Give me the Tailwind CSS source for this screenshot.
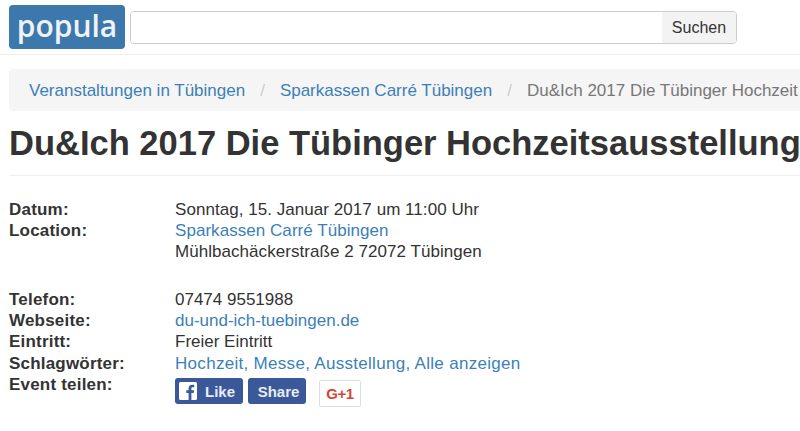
<!DOCTYPE html>
<html lang="de">
<head>
  <meta charset="UTF-8" />
  <title>Du&amp;Ich 2017</title>
  <script src="https://cdn.jsdelivr.net/npm/@tailwindcss/browser@4"></script>
</head>
<body class="bg-white h-[431px] w-[800px] overflow-hidden font-['Liberation_Sans',Arial,sans-serif] text-[#333] text-[17px] leading-[21px]">

  <!-- Header -->
  <div class="h-[55px] flex items-start border-b border-[#eee] pl-[9px] pt-[5px]">
    <div class="w-[116px] h-[44px] bg-[#3c78ab] rounded-[4px] flex items-center justify-center text-[#eef3f8] text-[30px] font-semibold font-['Open_Sans',sans-serif] leading-none pb-[2px]">popula</div>
    <div class="ml-[5px] mt-[6px] flex h-[33px] w-[607px] border border-[#ccc] rounded-[4px] overflow-hidden">
      <div class="flex-1 bg-white"></div>
      <div class="w-[74px] bg-[#f3f3f3] flex items-center justify-center text-[16px] text-[#333]">Suchen</div>
    </div>
  </div>

  <!-- Breadcrumb -->
  <div class="ml-[9px] mt-[14px] h-[42px] bg-[#f5f5f5] rounded-l-[4px] flex items-center pl-[20px] whitespace-nowrap overflow-hidden">
    <a class="text-[#3c7fb7]">Veranstaltungen in Tübingen</a>
    <span class="text-[#ccc] px-[15px]">/</span>
    <a class="text-[#3c7fb7]">Sparkassen Carré Tübingen</a>
    <span class="text-[#ccc] px-[15px]">/</span>
    <span class="text-[#777]">Du&amp;Ich 2017 Die Tübinger Hochzeit</span>
  </div>

  <!-- Title -->
  <h1 class="ml-[9px] mt-[14px] text-[34.5px] leading-[36px] font-bold whitespace-nowrap">Du&amp;Ich 2017 Die Tübinger Hochzeitsausstellung</h1>
  <div class="ml-[9px] mt-[14px] border-b border-[#eee]"></div>

  <!-- Details -->
  <div class="ml-[9px] mt-[23px] grid grid-cols-[166px_1fr]">
    <div class="font-bold tracking-[0.2px]">Datum:</div>
    <div class="tracking-[0.05px]">Sonntag, 15. Januar 2017 um 11:00 Uhr</div>
    <div class="font-bold tracking-[0.2px]">Location:</div>
    <div class="tracking-[0.05px]">
      <a class="text-[#3c7fb7] block">Sparkassen Carré Tübingen</a>
      Mühlbachäckerstraße 2 72072 Tübingen
    </div>
    <div class="h-[27px] col-span-2"></div>
    <div class="font-bold tracking-[0.2px]">Telefon:</div>
    <div>07474 9551988</div>
    <div class="font-bold tracking-[0.2px]">Webseite:</div>
    <div class="text-[#3c7fb7]">du-und-ich-tuebingen.de</div>
    <div class="font-bold tracking-[0.2px] h-[22px]">Eintritt:</div>
    <div>Freier Eintritt</div>
    <div class="font-bold tracking-[0.2px]">Schlagwörter:</div>
    <div class="text-[#3c7fb7] tracking-[0.3px]">Hochzeit, Messe, Ausstellung, Alle anzeigen</div>
    <div class="font-bold tracking-[0.2px]">Event teilen:</div>
    <div class="flex items-start pt-[4px]">
      <div class="h-[26px] w-[68px] bg-[#3b5998] rounded-[3px] flex items-center pl-[4px] text-[#e8ecf4] text-[15px] font-bold">
        <svg class="w-[18px] h-[18px]" viewBox="0 0 18 18"><rect width="18" height="18" rx="1.5" fill="#fff"/><path d="M12.4 18v-7h2.3l.4-2.7h-2.7V6.6c0-.8.2-1.3 1.3-1.3h1.500V2.900c-.3 0-1.100-.1-2.100-.1-2.100 0-3.500 1.300-3.500 3.600v1.900H7.300V11h2.300v7z" fill="#3b5998"/></svg>
        <span class="ml-[8px]">Like</span>
      </div>
      <div class="ml-[5px] h-[26px] w-[58px] bg-[#3b5998] rounded-[3px] flex items-center justify-center pl-[3px] text-[#e8ecf4] text-[15px] font-bold">Share</div>
      <div class="ml-[13px] mt-[2px] h-[27px] w-[42px] bg-white border border-[#ddd] rounded-[2px] flex items-center justify-center text-[#d14836] text-[15px] font-bold tracking-[-0.5px]">G+1</div>
    </div>
  </div>
</body>
</html>
